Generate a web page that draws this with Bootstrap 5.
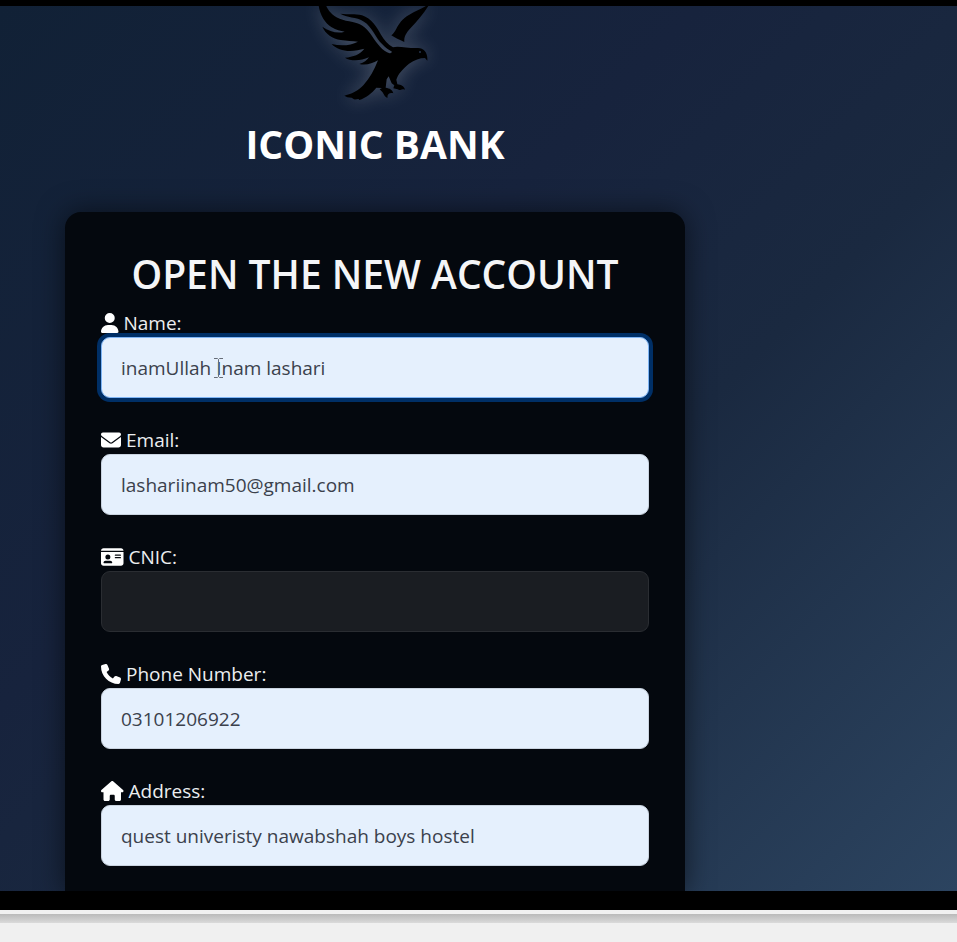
<!DOCTYPE html>
<html lang="en">
<head>
<meta charset="utf-8">
<meta name="viewport" content="width=device-width, initial-scale=1">
<title>Iconic Bank</title>
<link href="https://cdn.jsdelivr.net/npm/bootstrap@5.3.0/dist/css/bootstrap.min.css" rel="stylesheet">
<style>
body { font-family: "Segoe UI", "Open Sans", "Noto Sans", sans-serif; background: #f0f0f0; }
.player { background: #000; padding: 6px 0 19px; min-height: 0; }
.stage { background: linear-gradient(135deg, #112136 0%, #17233d 38%, #1a2940 60%, #2c4460 100%); min-height: 0; }
.stage-column { width: 100%; max-width: 750px; padding: 0 65px; }
.eagle { width: 150px; height: 105px; filter: drop-shadow(0 0 9px rgba(255,255,255,.22)); }
.brand-title { font-size: 39px; line-height: 48px; font-weight: 700; margin: 9px 0 44px; }
.panel { background: #04080e; border-radius: 16px 16px 0 0; padding: 36px 36px 0; box-shadow: 0 0 28px rgba(0,0,0,.55); }
.panel-title { font-size: 39px; line-height: 52px; font-weight: 600; color: #f4f5f7; margin: 0 0 8px; }
.field { margin-bottom: 27px; }
.field-label { display: flex; align-items: center; gap: 5px; height: 29px; font-size: 19px; line-height: 28px; color: #eceef0; }
.field-label svg { height: 20px; fill: #fff; }
.field-input { height: 61px; padding: 0 19px; font-size: 19px; border: 1px solid #c9d3df; border-radius: 9px; }
.field-input, .field-input:focus { background: #e5f0fd; color: #3b414c; }
.field-active { border-color: #7fb5f5; box-shadow: 0 0 0 4px #002f66; }
.field-input.field-empty { background: #1a1d22; border-color: #2a2d32; }
.pointer { position: absolute; left: 112px; top: 20px; width: 11px; height: 22px; }
.page-edge { height: 32px; background: linear-gradient(#f0f0f0 4px, #b9b9b9 4px, #dadada 13px, #f0f0f0 13px); }
</style>
<script src="https://cdn.jsdelivr.net/npm/bootstrap@5.3.0/dist/js/bootstrap.bundle.min.js"></script>
</head>
<body class="vh-100 d-flex flex-column overflow-hidden">
<div class="player flex-grow-1 d-flex flex-column">
  <main class="stage flex-grow-1 overflow-hidden">
    <div class="stage-column h-100 d-flex flex-column">
      <header class="text-center text-white flex-shrink-0">
        <svg class="eagle d-block mx-auto" viewBox="0 18 450 315" role="img" aria-label="Eagle">
          <path d="M55 8C57 38 72 68 95 82C108 91 122 93 134 95C112 102 88 94 67 80C76 102 98 116 122 120C140 123 158 123 174 125C152 137 122 139 95 132C108 146 128 153 150 153C166 153 180 149 193 146C180 163 160 171 135 173C152 184 182 183 207 172C201 181 192 188 178 192C197 196 216 192 234 181C222 211 209 235 190 256C173 273 158 281 133 287L142 292L155 293L162 298C170 299 176 294 178 300C197 294 216 280 229 263L246 264L239 268L247 276C252 282 254 292 263 293C260 282 270 276 280 280C278 269 269 265 257 263L260 238L266 229L275 250L283 256L280 265L293 268C302 274 302 264 315 269C312 258 302 254 292 253L289 239C294 222 308 207 327 191C344 180 359 174 375 174L382 182C384 158 372 145 354 144C322 145 293 136 279 142C264 134 252 120 243 104C230 81 215 55 186 46C165 40 146 44 121 41C140 54 169 49 192 65C216 80 226 112 247 133C257 144 267 150 276 155C274 160 267 161 261 157C241 148 226 122 210 100C196 80 181 71 158 66C130 62 105 54 91 37C84 29 78 20 76 8Z"/>
          <path d="M391 8C372 25 350 31 328 44C306 55 296 73 289 86C284 96 279 101 274 106C285 113 298 120 313 126C311 108 322 95 334 82C354 61 376 34 391 8Z"/>
          <circle cx="360" cy="156" r="3" fill="#26344d"/>
        </svg>
        <h1 class="brand-title">ICONIC BANK</h1>
      </header>
      <form class="panel flex-grow-1">
        <h2 class="panel-title text-center text-nowrap">OPEN THE NEW ACCOUNT</h2>
        <div class="field">
          <label class="field-label" for="name"><svg viewBox="0 0 448 512" aria-hidden="true"><path d="M224 256A128 128 0 1 0 224 0a128 128 0 1 0 0 256zm-45.700 48C79.800 304 0 383.800 0 482.300C0 498.700 13.300 512 29.700 512H418.300c16.400 0 29.700-13.300 29.700-29.700C448 383.800 368.200 304 269.700 304H178.300z"/></svg>Name:</label>
          <div class="position-relative">
            <input class="form-control field-input field-active" id="name" type="text" value="inamUllah Inam lashari">
            <svg class="pointer" viewBox="0 0 11 22" fill="none" stroke="#666d78" aria-hidden="true"><path d="M1 1.500H4.500L5.500 2.500L6.500 1.500H10M5.500 2.500V19.500M1 20.500H4.500L5.500 19.500L6.500 20.500H10"/></svg>
          </div>
        </div>
        <div class="field">
          <label class="field-label" for="email"><svg viewBox="0 0 512 512" aria-hidden="true"><path d="M48 64C21.500 64 0 85.500 0 112c0 15.100 7.100 29.300 19.200 38.400L236.800 313.600c11.400 8.500 27 8.500 38.400 0L492.800 150.400c12.100-9.100 19.200-23.300 19.200-38.400c0-26.500-21.500-48-48-48H48zM0 176V384c0 35.300 28.700 64 64 64H448c35.300 0 64-28.700 64-64V176L294.400 339.200c-22.800 17.100-54 17.100-76.800 0L0 176z"/></svg>Email:</label>
          <input class="form-control field-input" id="email" type="email" value="lashariinam50@gmail.com">
        </div>
        <div class="field">
          <label class="field-label" for="cnic"><svg viewBox="0 0 576 512" aria-hidden="true"><path fill-rule="evenodd" d="M0 96H576c0-35.300-28.700-64-64-64H64C28.700 32 0 60.700 0 96zM0 128V416c0 35.300 28.700 64 64 64H512c35.300 0 64-28.700 64-64V128H0zM64 405.300C64 375.800 87.900 352 117.300 352H234.700c29.500 0 53.300 23.900 53.300 53.300c0 5.900-4.800 10.700-10.700 10.700H74.700c-5.900 0-10.700-4.800-10.700-10.700zM176 192a64 64 0 1 1 0 128a64 64 0 1 1 0-128zM368 192H496a16 16 0 0 1 0 32H368a16 16 0 0 1 0-32zM368 256H496a16 16 0 0 1 0 32H368a16 16 0 0 1 0-32z"/></svg>CNIC:</label>
          <input class="form-control field-input field-empty" id="cnic" type="text">
        </div>
        <div class="field">
          <label class="field-label" for="phone"><svg viewBox="0 0 512 512" aria-hidden="true"><path d="M164.900 24.600c-7.700-18.600-28-28.500-47.400-23.200l-88 24C12.100 30.200 0 46 0 64C0 311.400 200.600 512 448 512c18 0 33.800-12.100 38.600-29.500l24-88c5.300-19.400-4.600-39.700-23.200-47.400l-96-40c-16.300-6.800-35.200-2.100-46.300 11.600L304.700 368C234.300 334.700 177.300 277.700 144 207.300L193.300 167c13.700-11.200 18.400-30 11.600-46.300l-40-96z"/></svg>Phone Number:</label>
          <input class="form-control field-input" id="phone" type="tel" value="03101206922">
        </div>
        <div class="field">
          <label class="field-label" for="address"><svg viewBox="0 0 576 512" aria-hidden="true"><path d="M575.800 255.500c0 18-15 32.100-32 32.100h-32V472c0 22.100-17.900 40-40 40H392c-22.100 0-40-17.900-40-40V384c0-17.700-14.300-32-32-32H256c-17.700 0-32 14.300-32 32v88c0 22.100-17.900 40-40 40H104c-22.100 0-40-17.900-40-40V287.600H32c-18 0-32-14-32-32.100c0-9 3-17 10-24L266.400 8c7-7 15-8 22-8s15 2 21 7L564.800 231.500c8 7 12 15 11 24z"/></svg>Address:</label>
          <input class="form-control field-input" id="address" type="text" value="quest univeristy nawabshah boys hostel">
        </div>
      </form>
    </div>
  </main>
</div>
<div class="page-edge flex-shrink-0"></div>
</body>
</html>
